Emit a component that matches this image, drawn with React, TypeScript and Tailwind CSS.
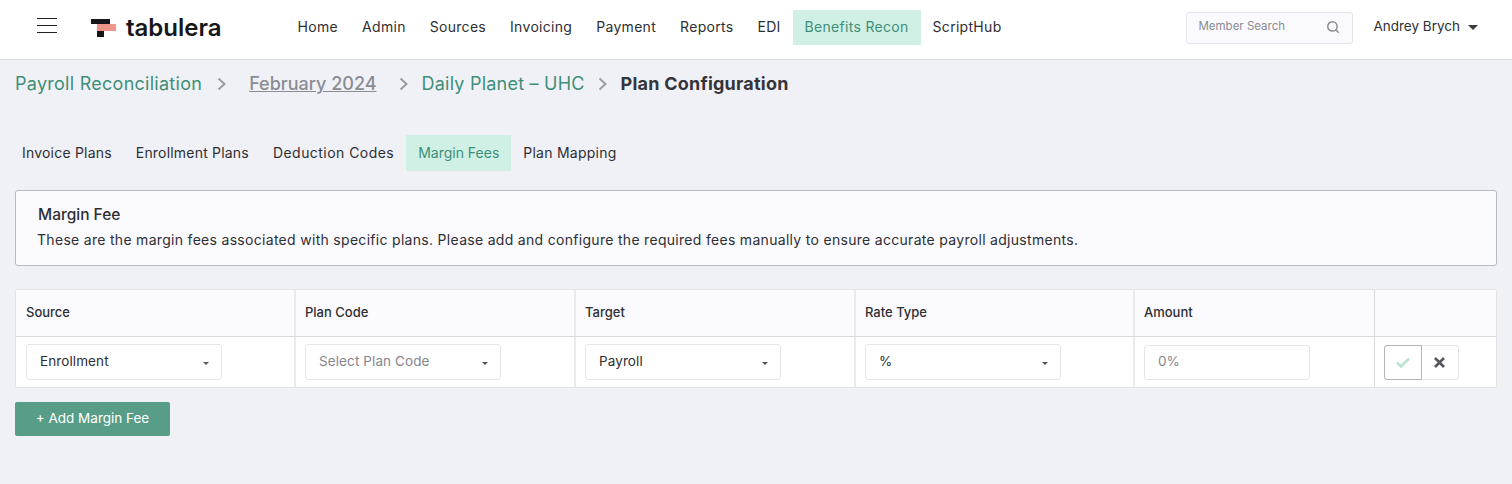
import { Search } from 'lucide-react';

const navItems = ['Home', 'Admin', 'Sources', 'Invoicing', 'Payment', 'Reports', 'EDI', 'Benefits Recon', 'ScriptHub'];
const tabs = [
  { label: 'Invoice Plans', spacing: 'tracking-[0.2px]' },
  { label: 'Enrollment Plans', spacing: 'tracking-[0.2px]' },
  { label: 'Deduction Codes', spacing: 'tracking-[0.45px]' },
  { label: 'Margin Fees', spacing: 'tracking-normal' },
  { label: 'Plan Mapping', spacing: 'tracking-[0.25px]' },
];

function Chevron() {
  return (
    <svg width="10" height="14" viewBox="0 0 10 14" fill="none" className="shrink-0">
      <path d="M1.5 1.5L7.5 7L1.5 12.5" stroke="#9a9ca3" strokeWidth="2" />
    </svg>
  );
}

function SelectBox({ label, placeholder = false }: { label: string; placeholder?: boolean }) {
  return (
    <div className="w-[196px] h-[36px] flex items-center justify-between pl-[13px] pr-3 bg-white border border-[#e6e6ea] rounded-[3px]">
      <span className={`pb-0.5 text-[13.5px] tracking-[0.1px] ${placeholder ? 'text-[#85868c]' : 'text-[#2e2f33]'}`}>{label}</span>
      <span className="w-0 h-0 mt-0.5 border-x-[3.5px] border-x-transparent border-t-[3.5px] border-t-[#55565c]" />
    </div>
  );
}

function HeaderCell({ label, className = 'border-r-2 border-[#e9e9ee]' }: { label: string; className?: string }) {
  return (
    <div className={`h-[46px] flex items-center pl-[9px] first:pl-[10px] text-[13px] font-medium text-[#2e2f33] ${className}`}>
      {label}
    </div>
  );
}

export default function App() {
  return (
    <div className="min-h-[484px] bg-[#f0f1f6] font-['Inter',sans-serif] text-[#2e2f33]">
      {/* Top bar */}
      <header className="h-[60px] bg-white border-b border-[#d9d9de] flex items-center pb-1">
        <div className="ml-[37px] w-[20px] flex flex-col gap-[6px] -mt-[4px]">
          <span className="h-px bg-[#222]" />
          <span className="h-px bg-[#222]" />
          <span className="h-px bg-[#222]" />
        </div>
        <div className="ml-[34px] flex items-center">
          <svg width="25" height="18" viewBox="0 0 25 18">
            <rect x="0" y="0" width="19" height="5" fill="#17171b" />
            <rect x="6" y="12" width="7" height="6" fill="#17171b" />
            <rect x="6" y="5" width="19" height="7" fill="#ee9488" />
          </svg>
          <span className="ml-[10px] mt-px text-[24px] font-semibold text-[#17171b] leading-none">tabulera</span>
        </div>
        <nav className="ml-[64px] flex items-center">
          {navItems.map(item => (
            <span
              key={item}
              className={`h-[35px] flex items-center px-3 pb-0.5 text-[14px] tracking-[0.3px] ${item === 'Benefits Recon' ? 'bg-[#d0f0e5] text-[#3f8f78]' : 'text-[#2e2f33]'}`}
            >
              {item}
            </span>
          ))}
        </nav>
        <div className="ml-auto flex items-center">
          <div className="w-[167px] h-[32px] flex items-center justify-between pl-[11px] pr-2 bg-[#faf9fd] border border-[#e3e3e8] rounded-[3px]">
            <span className="pb-0.5 text-[11.5px] text-[#8a8b91]">Member Search</span>
            <Search size={14} strokeWidth={2.5} className="text-[#8a8b91] -mt-px mr-1" />
          </div>
          <span className="ml-[20px] pb-0.5 text-[13.5px]">Andrey Brych</span>
          <span className="w-0 h-0 ml-2 mr-[34px] border-x-[5px] border-x-transparent border-t-[5px] border-t-[#3a3b40]" />
        </div>
      </header>

      <main className="px-[15px]">
        {/* Breadcrumb */}
        <div className="h-[47px] flex items-center text-[18px]">
          <span className="text-[#3f8f78] tracking-[0.27px]">Payroll Reconciliation</span>
          <span className="ml-[15px]"><Chevron /></span>
          <span className="ml-[22px] text-[#8a8c93] underline font-medium">February 2024</span>
          <span className="ml-[22px]"><Chevron /></span>
          <span className="ml-[13px] text-[#3f8f78] tracking-[0.22px]">Daily Planet – UHC</span>
          <span className="ml-[13px]"><Chevron /></span>
          <span className="ml-[13px] font-bold text-[#34353a] tracking-[0.22px]">Plan Configuration</span>
        </div>

        {/* Tabs */}
        <div className="mt-[28px] flex items-center">
          {tabs.map(tab => (
            <span
              key={tab.label}
              className={`h-[36px] flex items-center px-3 pb-0.5 text-[14px] first:pl-[7px] ${tab.spacing} ${tab.label === 'Margin Fees' ? 'bg-[#d0f0e5] text-[#3f8f78]' : 'text-[#2e2f33]'}`}
            >
              {tab.label}
            </span>
          ))}
        </div>

        {/* Info box */}
        <div className="mt-[19px] h-[76px] bg-[#fafaff] border border-[#b9bac0] rounded-[3px] px-[21px] pt-[14px]">
          <div className="pl-px text-[15.5px] font-medium leading-5">Margin Fee</div>
          <div className="mt-[5px] text-[14px] tracking-[0.3px] leading-5">
            These are the margin fees associated with specific plans. Please add and configure the required fees manually to ensure accurate payroll adjustments.
          </div>
        </div>

        {/* Table */}
        <div className="mt-[23px] border border-[#e3e3e8] rounded-[2px] bg-white">
          <div className="grid grid-cols-[280px_280px_280px_279px_240px_1fr] bg-[#fafaff] border-b border-[#d9d9de]">
            <HeaderCell label="Source" />
            <HeaderCell label="Plan Code" />
            <HeaderCell label="Target" />
            <HeaderCell label="Rate Type" />
            <HeaderCell label="Amount" className="border-r border-[#d9d9de]" />
            <HeaderCell label="" className="" />
          </div>
          <div className="grid grid-cols-[280px_280px_280px_279px_240px_1fr] h-[50px]">
            <div className="flex items-center pl-[10px] border-r-2 border-[#e9e9ee]"><SelectBox label="Enrollment" /></div>
            <div className="flex items-center pl-[9px] border-r-2 border-[#e9e9ee]"><SelectBox label="Select Plan Code" placeholder /></div>
            <div className="flex items-center pl-[9px] border-r-2 border-[#e9e9ee]"><SelectBox label="Payroll" /></div>
            <div className="flex items-center pl-[9px] border-r-2 border-[#e9e9ee]"><SelectBox label="%" /></div>
            <div className="flex items-center pl-[9px] border-r border-[#d9d9de]">
              <div className="w-[166px] h-[35px] flex items-center pl-[13px] pb-0.5 bg-white border border-[#e6e6ea] rounded-[3px] text-[13.5px] text-[#85868c]">0%</div>
            </div>
            <div className="flex items-center pl-[9px]">
              <div className="flex h-[35px] rounded-[3px] border border-[#e6e6ea]">
                <span className="w-[38px] -m-px flex items-center justify-center border border-[#b5b5b9] rounded-l-[3px]">
                  <svg width="14" height="11" viewBox="0 0 14 11"><path d="M1 5.5L5 9.5L13 1.5" fill="none" stroke="#b9e6cf" strokeWidth="2.6" /></svg>
                </span>
                <span className="w-[37px] flex items-center justify-center">
                  <svg width="11" height="11" viewBox="0 0 11 11"><path d="M1 1L10 10M10 1L1 10" fill="none" stroke="#55565c" strokeWidth="2.6" /></svg>
                </span>
              </div>
            </div>
          </div>
        </div>

        <button className="mt-[14px] w-[155px] h-[34px] pb-0.5 bg-[#579d87] text-white text-[13.5px] rounded-[2px] flex items-center justify-center">
          + Add Margin Fee
        </button>
      </main>
    </div>
  );
}
